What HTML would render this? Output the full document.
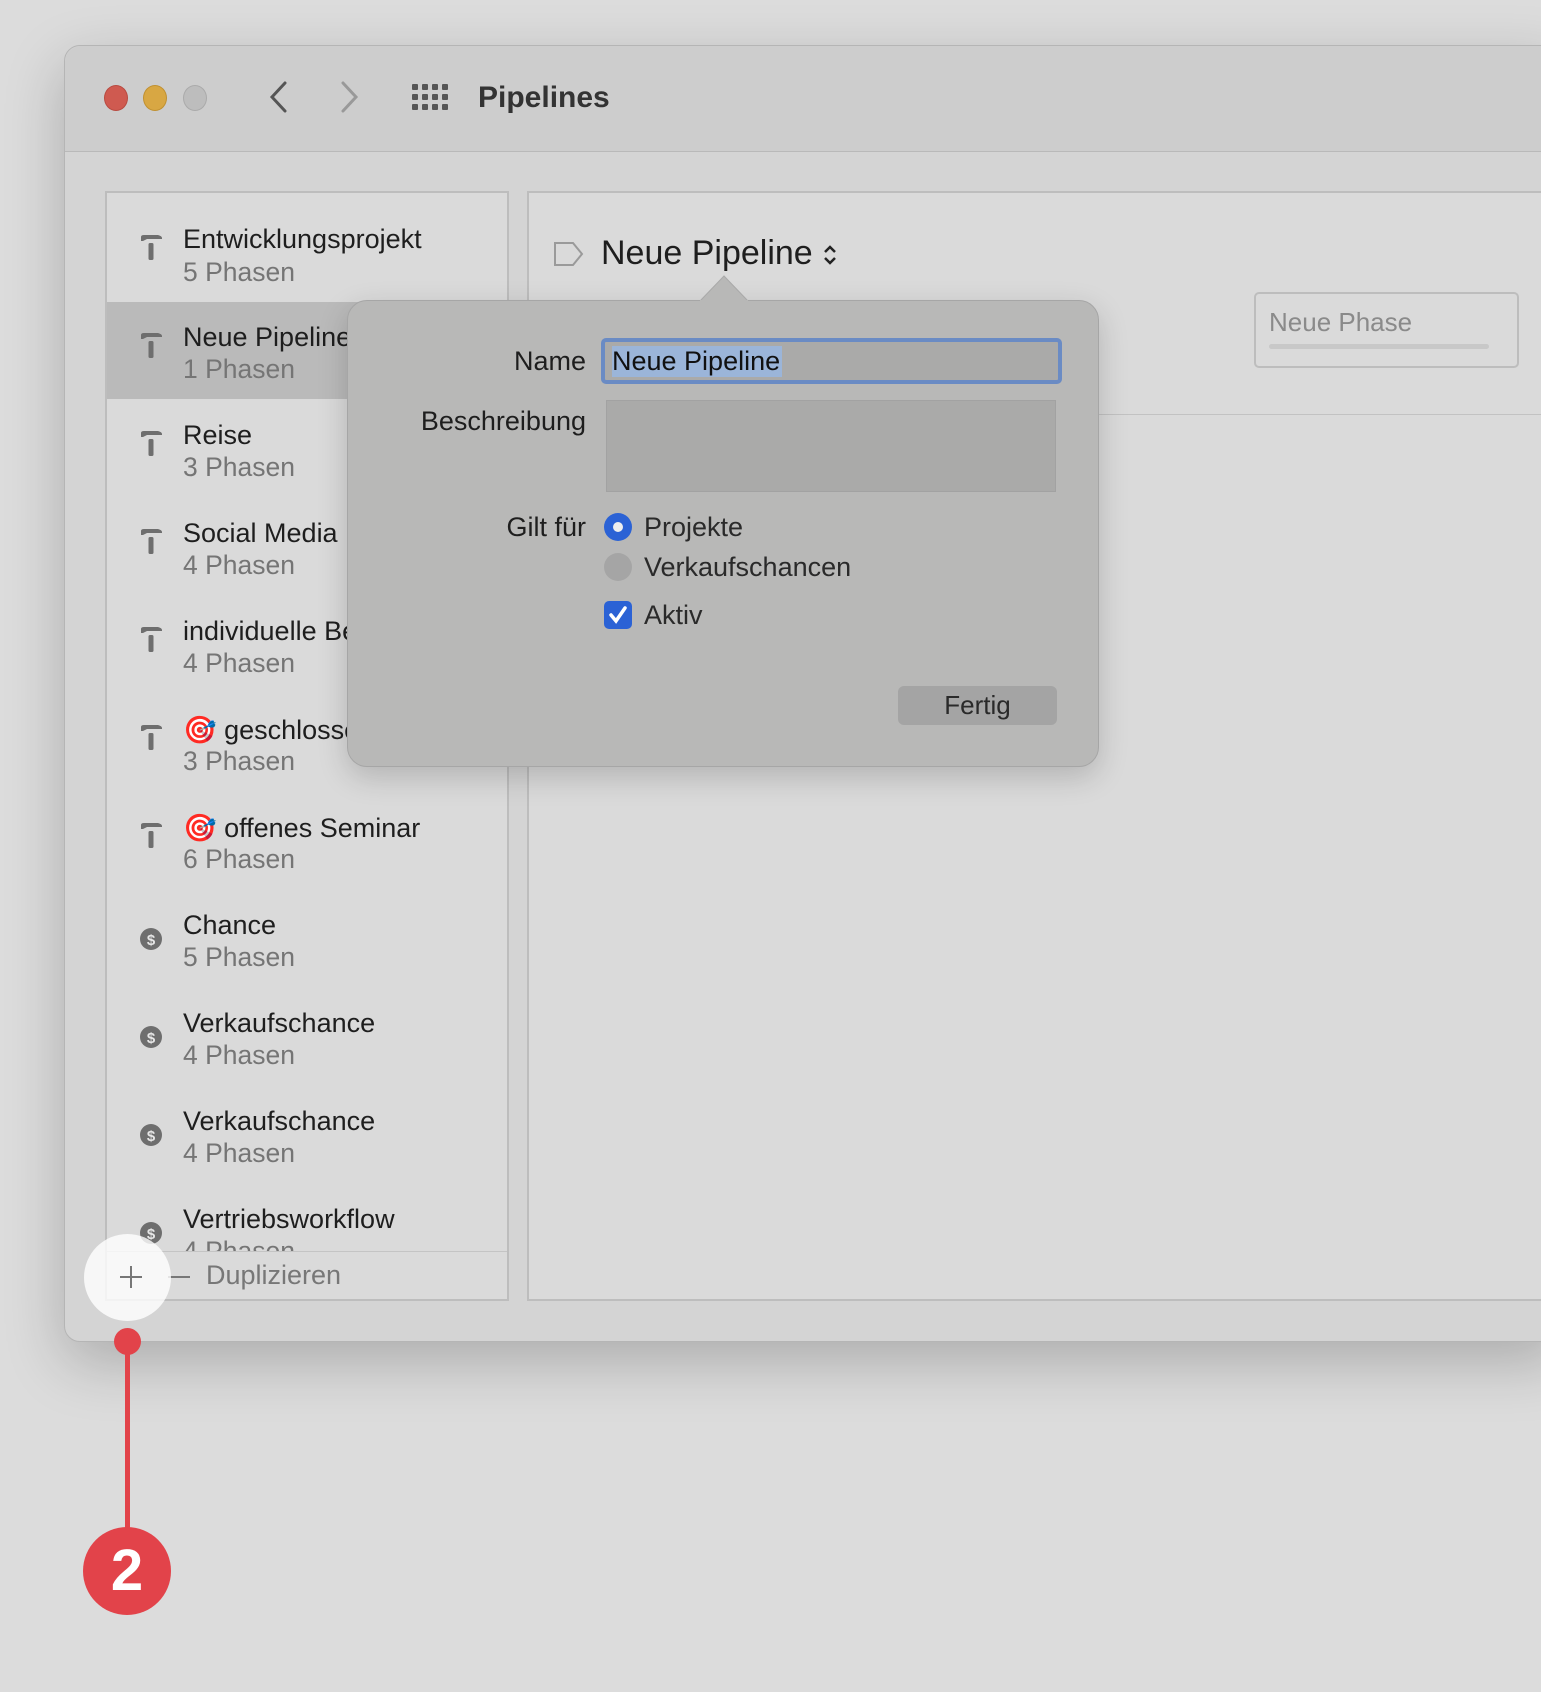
<!DOCTYPE html>
<html><head><meta charset="utf-8"><style>
*{margin:0;padding:0;box-sizing:border-box}
body{width:1541px;height:1692px;background:#dcdcdc;font-family:"Liberation Sans",sans-serif;position:relative;overflow:hidden}
.a{position:absolute}
.win{left:64px;top:45px;width:1500px;height:1297px;background:#d4d4d4;border:1px solid #b5b5b5;border-radius:16px 0 0 16px;box-shadow:0 20px 60px rgba(0,0,0,.22)}
.tb{left:0;top:0;width:1500px;height:106px;background:#cdcdcd;border-bottom:1px solid #b9b9b9;border-radius:16px 0 0 0}
.dot{width:24px;height:26px;border-radius:50%;top:85px}
.side{left:105px;top:191px;width:404px;height:1110px;background:#dadada;border:2px solid #bdbdbd;overflow:hidden}
.row{left:0;width:400px;height:97px}
.t{left:78px;font-size:27px;color:#1e1e1e;white-space:nowrap}
.s{left:78px;font-size:26.5px;color:#757575}
.main{left:527px;top:191px;width:1020px;height:1110px;background:#dadada;border:2px solid #bdbdbd}
.pop{left:347px;top:300px;width:752px;height:467px;background:#b8b8b7;border:1px solid #a6a6a6;border-radius:20px;box-shadow:0 10px 30px rgba(0,0,0,.18)}
.lbl{font-size:27px;color:#1e1e1e;text-align:right;width:240px}
.opt{font-size:27px;color:#2a2a2a}
</style></head><body>
<div class="a win">
 <div class="a tb"></div>
</div>
<div class="a dot" style="left:104px;background:#cf5a50;border:1px solid #b84a40"></div>
<div class="a dot" style="left:143px;background:#d8a743;border:1px solid #c09030"></div>
<div class="a dot" style="left:183px;background:#bdbdbd;border:1px solid #aaa"></div>
<svg class="a" style="left:265px;top:80px" width="26" height="34"><path d="M20 3 L7 17 L20 31" stroke="#555" stroke-width="3" fill="none" stroke-linecap="round"/></svg>
<svg class="a" style="left:337px;top:80px" width="26" height="34"><path d="M6 3 L19 17 L6 31" stroke="#999" stroke-width="3" fill="none" stroke-linecap="round"/></svg>
<svg class="a" style="left:412px;top:84px" width="36" height="28" fill="#555">
<rect x="0" y="0" width="6" height="6" rx="1"/><rect x="10" y="0" width="6" height="6" rx="1"/><rect x="20" y="0" width="6" height="6" rx="1"/><rect x="30" y="0" width="6" height="6" rx="1"/>
<rect x="0" y="10" width="6" height="6" rx="1"/><rect x="10" y="10" width="6" height="6" rx="1"/><rect x="20" y="10" width="6" height="6" rx="1"/><rect x="30" y="10" width="6" height="6" rx="1"/>
<rect x="0" y="20" width="6" height="6" rx="1"/><rect x="10" y="20" width="6" height="6" rx="1"/><rect x="20" y="20" width="6" height="6" rx="1"/><rect x="30" y="20" width="6" height="6" rx="1"/></svg>
<div class="a" style="left:478px;top:81px;font-size:30px;font-weight:bold;color:#333">Pipelines</div>

<div class="a side">
 <div class="a row" style="top:109px;background:#bababa"></div>
 <div class="a" style="left:0;top:1058px;width:400px;height:50px;background:#dadada;border-top:1px solid #c4c4c4"></div>
</div>
<div class="a" style="left:105px;top:191px;width:404px;height:1060px;overflow:hidden">
<div class="a t" style="top:33px">Entwicklungsprojekt</div><div class="a s" style="top:66px">5 Phasen</div>
<div class="a t" style="top:131px">Neue Pipeline</div><div class="a s" style="top:163px">1 Phasen</div>
<div class="a t" style="top:229px">Reise</div><div class="a s" style="top:261px">3 Phasen</div>
<div class="a t" style="top:327px">Social Media Beiträge</div><div class="a s" style="top:359px">4 Phasen</div>
<div class="a t" style="top:425px">individuelle Beratung</div><div class="a s" style="top:457px">4 Phasen</div>
<div class="a t" style="top:523px">🎯 geschlossenes Seminar</div><div class="a s" style="top:555px">3 Phasen</div>
<div class="a t" style="top:621px">🎯 offenes Seminar</div><div class="a s" style="top:653px">6 Phasen</div>
<div class="a t" style="top:719px">Chance</div><div class="a s" style="top:751px">5 Phasen</div>
<div class="a t" style="top:817px">Verkaufschance</div><div class="a s" style="top:849px">4 Phasen</div>
<div class="a t" style="top:915px">Verkaufschance</div><div class="a s" style="top:947px">4 Phasen</div>
<div class="a t" style="top:1013px">Vertriebsworkflow</div><div class="a s" style="top:1045px">4 Phasen</div>
<svg class="a" style="left:0;top:0" width="80" height="1110">
<defs><g id="h"><rect x="-2.5" y="-3" width="5" height="17" rx="1.5"/><path d="M-10 -9 Q-10 -11 -7 -11 L7 -11 Q11 -10 11 -8 L11 -7 L-4 -7 L-8 -5 L-10 -5 Z"/></g></defs>
<g fill="#6e6e6e">
<use href="#h" x="46" y="55"/><use href="#h" x="46" y="153"/><use href="#h" x="46" y="251"/><use href="#h" x="46" y="349"/><use href="#h" x="46" y="447"/><use href="#h" x="46" y="545"/><use href="#h" x="46" y="643"/>
<circle cx="46" cy="748" r="11"/><circle cx="46" cy="846" r="11"/><circle cx="46" cy="944" r="11"/><circle cx="46" cy="1042" r="11"/>
</g>
<g fill="#e6e6e6" font-size="15" font-weight="bold" text-anchor="middle" font-family="Liberation Sans">
<text x="46" y="754">$</text><text x="46" y="852">$</text><text x="46" y="950">$</text><text x="46" y="1048">$</text></g>
</svg>
</div>
<div class="a" style="left:168px;top:1276px;width:22px;height:2px;background:#777"></div>
<div class="a" style="left:206px;top:1262px;font-size:27px;color:#777;line-height:1">Duplizieren</div>

<div class="a main">
 <div class="a" style="left:0;top:221px;width:1020px;height:1px;background:#c2c2c2"></div>
 <div class="a" style="left:725px;top:99px;width:265px;height:76px;border:2px solid #bdbdbd;border-radius:5px"></div>
 <div class="a" style="left:740px;top:114px;font-size:26px;color:#8a8a8a">Neue Phase</div>
 <div class="a" style="left:740px;top:151px;width:220px;height:5px;background:#c8c8c8;border-radius:3px"></div>
</div>
<svg class="a" style="left:553px;top:240px" width="32" height="28"><path d="M2 3 H20 L29 14 L20 25 H2 Z" fill="none" stroke="#9a9a9a" stroke-width="2"/></svg>
<div class="a" style="left:601px;top:234px;font-size:34px;color:#1e1e1e">Neue Pipeline</div>
<svg class="a" style="left:822px;top:242px" width="16" height="26"><path d="M3 10 L8 5 L13 10 M3 16 L8 21 L13 16" fill="none" stroke="#222" stroke-width="2.5"/></svg>

<div class="a pop"></div>
<svg class="a" style="left:700px;top:274px" width="48" height="28"><path d="M0 27 L24 2 L48 27 Z" fill="#b8b8b7"/><path d="M0 27 L24 2 L48 27" fill="none" stroke="#a9a9a9" stroke-width="1"/><rect x="0" y="26" width="48" height="3" fill="#b8b8b7"/></svg>
<div class="a lbl" style="left:346px;top:346px">Name</div>
<div class="a" style="left:601px;top:338px;width:461px;height:46px;border:4px solid #6a8bc4;border-radius:5px;background:#aaaaa9"></div>
<div class="a" style="left:612px;top:346px;width:170px;height:31px;background:#9bb5d9"></div>
<div class="a" style="left:612px;top:346px;font-size:27px;color:#111">Neue Pipeline</div>
<div class="a lbl" style="left:346px;top:406px">Beschreibung</div>
<div class="a" style="left:606px;top:400px;width:450px;height:92px;background:#aaaaa9;border:1px solid #a2a2a2"></div>
<div class="a lbl" style="left:346px;top:512px">Gilt für</div>
<div class="a" style="left:604px;top:513px;width:28px;height:28px;border-radius:50%;background:#2b62d5"></div>
<div class="a" style="left:613px;top:522px;width:10px;height:10px;border-radius:50%;background:#eee"></div>
<div class="a opt" style="left:644px;top:512px">Projekte</div>
<div class="a" style="left:604px;top:553px;width:28px;height:28px;border-radius:50%;background:#a5a5a5"></div>
<div class="a opt" style="left:644px;top:552px">Verkaufschancen</div>
<div class="a" style="left:604px;top:601px;width:28px;height:28px;border-radius:5px;background:#2b62d5"></div>
<svg class="a" style="left:604px;top:601px" width="28" height="28"><path d="M7 14 L12 20 L21 7" fill="none" stroke="#fff" stroke-width="3.5" stroke-linecap="round"/></svg>
<div class="a opt" style="left:644px;top:600px">Aktiv</div>
<div class="a" style="left:898px;top:686px;width:159px;height:39px;background:#a4a4a4;border-radius:6px;font-size:26px;color:#2a2a2a;text-align:center;line-height:39px">Fertig</div>

<div class="a" style="left:84px;top:1234px;width:87px;height:87px;border-radius:50%;background:rgba(255,255,255,.8)"></div>
<svg class="a" style="left:118px;top:1264px" width="26" height="26"><path d="M13 2 V24 M2 13 H24" stroke="#777" stroke-width="2"/></svg>
<div class="a" style="left:125px;top:1341px;width:5px;height:190px;background:#e2434a"></div>
<div class="a" style="left:114px;top:1328px;width:27px;height:27px;border-radius:50%;background:#e2434a"></div>
<div class="a" style="left:83px;top:1527px;width:88px;height:88px;border-radius:50%;background:#e2434a;color:#fff;font-size:58px;font-weight:bold;text-align:center;line-height:88px">2</div>
</body></html>
